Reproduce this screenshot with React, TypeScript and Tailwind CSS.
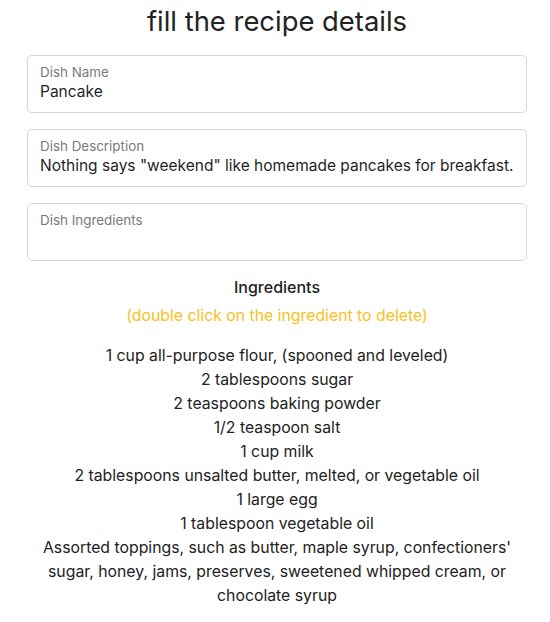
import React from 'react';

const ingredients = [
  '1 cup all-purpose flour, (spooned and leveled)',
  '2 tablespoons sugar',
  '2 teaspoons baking powder',
  '1/2 teaspoon salt',
  '1 cup milk',
  '2 tablespoons unsalted butter, melted, or vegetable oil',
  '1 large egg',
  '1 tablespoon vegetable oil',
  "Assorted toppings, such as butter, maple syrup, confectioners' sugar, honey, jams, preserves, sweetened whipped cream, or chocolate syrup",
];

function Field({ label, value }: { label: string; value?: string }) {
  return (
    <div className="border border-[#d4d6db] rounded-[5px] px-3 pt-[8px] pb-[9px] h-[58px]">
      <div className="text-[13.4px] leading-[17px] text-[#7a7a7a]">{label}</div>
      <div className="text-[15.5px] leading-[22px] text-[#1f1f1f]">{value}</div>
    </div>
  );
}

export default function App() {
  return (
    <div className="bg-white min-h-[622px] font-['Inter',sans-serif] text-[#222]">
      <div className="w-[500px] ml-[27px]">
        <h1 className="text-[27.4px] leading-[40px] text-center text-[#222] pt-[1px] mb-[14px]">fill the recipe details</h1>
        <div className="flex flex-col gap-[16px]">
          <Field label="Dish Name" value="Pancake" />
          <Field label="Dish Description" value={'Nothing says "weekend" like homemade pancakes for breakfast.'} />
          <Field label="Dish Ingredients" />
        </div>
        <div className="text-center mt-[15px]">
          <div className="text-[16px] leading-[22px] font-medium">Ingredients</div>
          <div className="text-[15.8px] leading-[22px] text-[#fbbf24] mt-[7px]">(double click on the ingredient to delete)</div>
          <ul className="mt-[17px] text-[15.8px] leading-[24px] text-[#222]">
            {ingredients.map((item, i) => (
              <li key={i} className="px-2">{item}</li>
            ))}
          </ul>
        </div>
      </div>
    </div>
  );
}
